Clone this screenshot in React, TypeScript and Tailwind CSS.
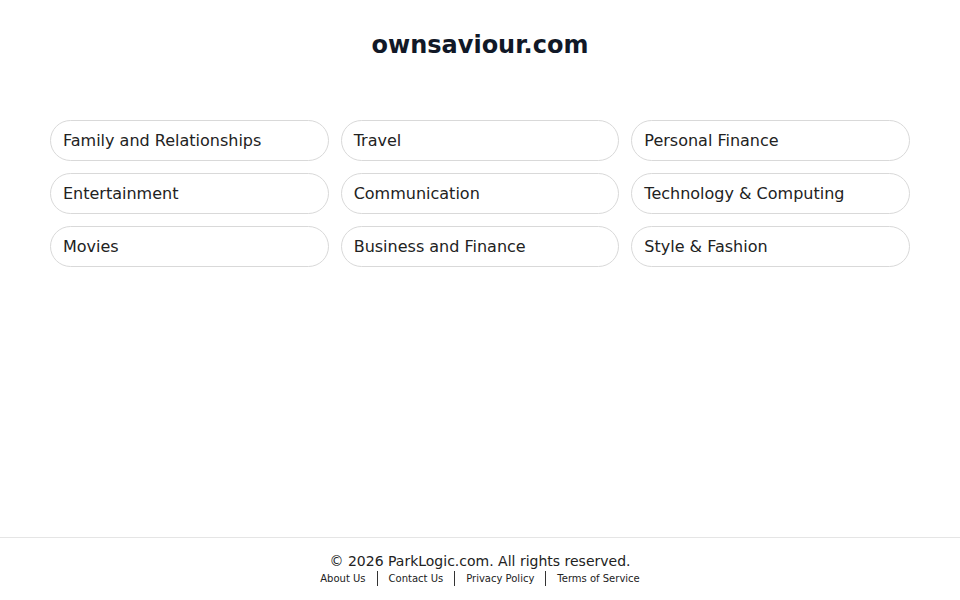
const categories = [
  "Family and Relationships",
  "Travel",
  "Personal Finance",
  "Entertainment",
  "Communication",
  "Technology & Computing",
  "Movies",
  "Business and Finance",
  "Style & Fashion",
];

const links = ["About Us", "Contact Us", "Privacy Policy", "Terms of Service"];

export default function App() {
  return (
    <div className="min-h-screen flex flex-col bg-white font-['DejaVu_Sans',sans-serif]">
      <main className="flex-1">
        <h1 className="pt-[29px] text-center text-2xl leading-8 font-bold text-[#111827]">
          ownsaviour.com
        </h1>
        <div className="mx-[50px] mt-[59px] grid grid-cols-3 gap-3">
          {categories.map((c) => (
            <a
              key={c}
              href="#"
              className="flex h-[41px] items-center rounded-full border border-[#d9d9d9] px-3 text-base text-[#222]"
            >
              {c}
            </a>
          ))}
        </div>
      </main>
      <footer className="border-t border-[#e5e5e5] pt-[13px] pb-[14px] text-center text-[#222]">
        <p className="text-sm leading-5">© 2026 ParkLogic.com. All rights reserved.</p>
        <div className="flex items-center justify-center text-[10px] leading-[14px]">
          {links.map((l, i) => (
            <div key={l} className="flex items-center">
              {i > 0 && <span className="mx-[11px] h-[15px] border-l border-[#333]" />}
              <a href="#">{l}</a>
            </div>
          ))}
        </div>
      </footer>
    </div>
  );
}
